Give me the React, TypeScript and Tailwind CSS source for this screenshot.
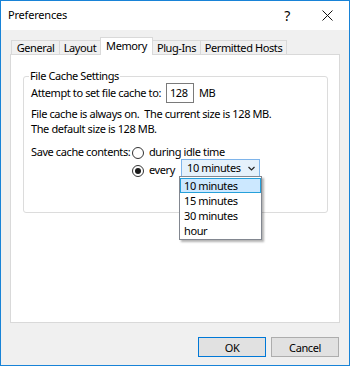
import React from 'react';

const tabs = [
  { label: 'General', w: 'w-[49px]' },
  { label: 'Layout', w: 'w-[42px]' },
  { label: 'Memory', w: 'w-[53px]' },
  { label: 'Plug-Ins', w: 'w-[49px]' },
  { label: 'Permitted Hosts', w: 'w-[87px]' },
];
const options = ['10 minutes', '15 minutes', '30 minutes', 'hour'];

function Radio({ checked }: { checked?: boolean }) {
  return (
    <span className="w-[12px] h-[12px] rounded-full border border-[#333] bg-white flex items-center justify-center flex-shrink-0">
      {checked && <span className="w-[6px] h-[6px] rounded-full bg-[#1a1a1a]" />}
    </span>
  );
}

export default function App() {
  return (
    <div
      className="w-[350px] h-[366px] border border-[#1883d7] bg-[#f0f0f0] flex flex-col text-[11px] tracking-[-0.4px] text-black overflow-hidden whitespace-nowrap"
      style={{ fontFamily: '"Noto Sans", "Open Sans", sans-serif' }}
    >
      {/* Title bar */}
      <div className="h-[29px] bg-white flex items-center pl-[7px] flex-shrink-0">
        <span className="text-[11px] tracking-[-0.2px]">Preferences</span>
        <span className="ml-auto text-[14px] w-[12px] text-center mr-[29px]">?</span>
        <svg className="w-[11px] h-[11px] mr-[16px]" viewBox="0 0 11 11" fill="none" stroke="#111" strokeWidth={1}>
          <path d="M0.5 0.5L10.5 10.5M10.5 0.5L0.5 10.5" />
        </svg>
      </div>

      {/* Body */}
      <div className="flex-1 flex flex-col px-[9px] pt-[7px]">
        {/* Tabs */}
        <div className="flex items-end h-[17px] pl-[1px] relative z-10">
          {tabs.map((t, i) => {
            const active = t.label === 'Memory';
            return active ? (
              <div
                key={t.label}
                className={`${t.w} h-[18px] -mb-px -ml-px bg-white border border-b-0 border-[#d9d9d9] flex items-start justify-center pt-[1px] leading-[14px]`}
              >
                {t.label}
              </div>
            ) : (
              <div
                key={t.label}
                className={`${t.w} ${i === 0 ? '' : '-ml-px'} h-[14px] bg-[#f0f0f0] border border-b-0 border-[#d9d9d9] flex items-center justify-center leading-[12px]`}
              >
                {t.label}
              </div>
            );
          })}
        </div>

        {/* Panel */}
        <div className="h-[269px] bg-white border border-[#d9d9d9] pt-[14px] pl-[12px] pr-[11px]">
          <fieldset className="border border-[#dcdcdc] rounded-[3px] pl-[5px] pr-[8px] h-[144px]">
            <legend className="px-[1px] leading-[14px]">File Cache Settings</legend>
            <div className="pl-[2px] flex flex-col">
              <div className="flex items-center h-[20px]">
                <span>Attempt to set file cache to:</span>
                <span className="ml-[5px] w-[28px] h-[20px] border border-[#7a7a7a] flex items-center pl-[3px]">128</span>
                <span className="ml-[5px]">MB</span>
              </div>
              <div className="mt-[3px] leading-[15px]">File cache is always on.&nbsp; The current size is 128 MB.</div>
              <div className="leading-[15px]">The default size is 128 MB.</div>
              <div className="flex items-center h-[15px] mt-[9px]">
                <span className="w-[101px]">Save cache contents:</span>
                <Radio />
                <span className="ml-[5px]">during idle time</span>
              </div>
              <div className="flex items-center h-[19px] mt-[1px] pl-[101px] relative">
                <Radio checked />
                <span className="ml-[5px] w-[32px]">every</span>
                <div className="w-[79px] h-[18px] -mt-[5px] border border-[#7eb4ea] bg-[#e5f1fb] flex items-center pl-[5px] pr-[4px]">
                  <span>10 minutes</span>
                  <svg className="ml-auto w-[7px] h-[5px]" viewBox="0 0 7 5" fill="none" stroke="#222" strokeWidth={1.2}>
                    <path d="M0.5 1L3.5 4L6.5 1" />
                  </svg>
                </div>
                {/* dropdown list */}
                <div className="absolute left-[148px] top-[15px] w-[83px] bg-white border border-[#828790] shadow-[2px_2px_2px_rgba(0,0,0,0.3)] flex flex-col py-[1px] z-20">
                  {options.map((o, i) => (
                    <div
                      key={o}
                      className={
                        i === 0
                          ? 'h-[15px] leading-[13px] px-[3px] bg-[#cce8ff] border border-[#26a0da]'
                          : 'h-[15px] leading-[15px] px-[4px]'
                      }
                    >
                      {o}
                    </div>
                  ))}
                </div>
              </div>
            </div>
          </fieldset>
        </div>

        {/* Buttons */}
        <div className="flex justify-end gap-[5px] mt-[14px] pr-[1px]">
          <button className="w-[68px] h-[20px] bg-[#e1e1e1] border border-[#0078d7] leading-none">OK</button>
          <button className="w-[68px] h-[20px] bg-[#e1e1e1] border border-[#adadad] leading-none">Cancel</button>
        </div>
      </div>
    </div>
  );
}
